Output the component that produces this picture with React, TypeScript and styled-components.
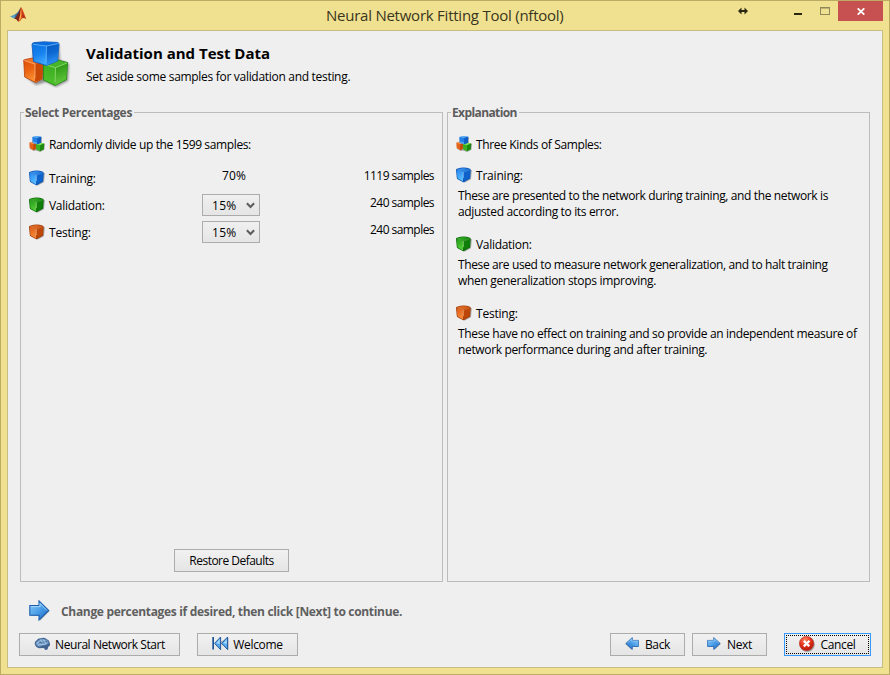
import React from "react";
import styled, { createGlobalStyle } from "styled-components";

const Global = createGlobalStyle`
  * { box-sizing: border-box; }
  body { margin: 0; font-family: "Open Sans", "Noto Sans", sans-serif; font-size: 12px; color: #000; }
  svg { display: block; flex: none; }
`;

const Window = styled.div`
  width: 890px;
  height: 675px;
  display: flex;
  flex-direction: column;
  background: #f0e190;
  border: 1px solid #bcab62;
  padding: 0 6px 6px;
  overflow: hidden;
`;

const TitleBar = styled.header`
  height: 29px;
  flex: none;
  display: grid;
  grid-template-columns: 319px 1fr auto;
`;

const AppIcon = styled.div`
  padding: 5px 0 0 3px;
`;

const WindowTitle = styled.h1`
  margin: 0;
  padding-top: 3px;
  font-size: 15px;
  line-height: 22px;
  font-weight: 400;
  letter-spacing: -0.24px;
  color: #3a3520;
  white-space: nowrap;
`;

const Controls = styled.div`
  display: flex;
  align-items: flex-start;
`;

const CloseButton = styled.button`
  width: 45px;
  height: 20px;
  margin-left: 7px;
  padding: 0;
  border: 0;
  background: #c75050;
  display: flex;
  align-items: center;
  justify-content: center;
`;

const Client = styled.main`
  flex: 1;
  display: flex;
  flex-direction: column;
  background: #efefef;
  border: 1px solid #c8bd80;
  padding: 0 12px 11px;
`;

const Header = styled.section`
  display: flex;
  height: 81px;
  padding: 9px 0 0 3px;
  gap: 15px;
`;

const HeaderText = styled.div`
  padding-top: 2px;
`;

const Heading = styled.h2`
  margin: 0;
  font-size: 15px;
  line-height: 22px;
  font-weight: 700;
  letter-spacing: 0;
`;

const Text = styled.span<{ $ls?: number }>`
  display: block;
  font-size: 12px;
  line-height: 16px;
  white-space: nowrap;
  letter-spacing: ${(p) => p.$ls ?? -0.35}px;
`;

const SubHeading = styled(Text)`
  margin-top: 5px;
`;

const Panels = styled.div`
  display: grid;
  grid-template-columns: 423px 423px;
  gap: 4px;
  height: 470px;
`;

const Panel = styled.section`
  position: relative;
  display: flex;
  flex-direction: column;
  border: 1px solid #bcbcbc;
  padding: 23px 8px 9px;
`;

const Legend = styled.h3<{ $ls: number }>`
  position: absolute;
  left: 3px;
  top: -8px;
  margin: 0;
  padding: 0 2px 0 1px;
  background: #efefef;
  font-size: 12px;
  line-height: 16px;
  font-weight: 700;
  letter-spacing: ${(p) => p.$ls}px;
  color: #5c5c5c;
  white-space: nowrap;
`;

const IconLine = styled.div`
  display: flex;
  height: 18px;
  gap: 4px;
`;

const IconLabel = styled(Text)`
  padding-top: 1px;
`;

const SampleGrid = styled.div`
  margin-top: 14px;
  display: grid;
  grid-template-columns: 173px 58px 1fr;
  grid-auto-rows: 27px;
`;

const SampleLabel = styled(IconLine)`
  padding-top: 2px;
`;

const Percent = styled(Text)`
  text-align: center;
  padding-left: 6px;
`;

const Count = styled(Text)`
  text-align: right;
`;

const Select = styled.button`
  width: 58px;
  height: 22px;
  margin-top: -1px;
  padding: 1px 4px 0 9px;
  display: flex;
  align-items: center;
  justify-content: space-between;
  border: 1px solid #acacac;
  background: linear-gradient(#f0f0f0, #e5e5e5);
  font: inherit;
  color: #000;
`;

const Button = styled.button<{ $w: number; $gap?: number; $focus?: boolean }>`
  position: relative;
  flex: none;
  width: ${(p) => p.$w}px;
  height: 23px;
  padding: 0;
  display: flex;
  align-items: center;
  justify-content: center;
  gap: ${(p) => p.$gap ?? 4}px;
  border: 1px solid ${(p) => (p.$focus ? "#3399ff" : "#acacac")};
  background: linear-gradient(#f1f1f1, #e5e5e5);
  font: inherit;
  color: #000;

  svg {
    margin-bottom: 2px;
  }

  &::after {
    content: "";
    display: ${(p) => (p.$focus ? "block" : "none")};
    position: absolute;
    inset: 1px;
    border: 1px dotted #000;
  }
`;

const RestoreRow = styled.div`
  margin: auto 0 0;
  display: flex;
  justify-content: center;
`;

const Kind = styled.div<{ $first?: boolean }>`
  margin-top: ${(p) => (p.$first ? 13 : 16)}px;
  height: 53px;
`;

const KindText = styled.div`
  padding: 3px 0 0 2px;
`;

const Hint = styled.div`
  display: flex;
  gap: 10px;
  height: 51px;
  padding: 18px 0 0 9px;
`;

const HintText = styled(Text)`
  padding: 4px 0 0 1px;
  font-weight: 700;
  color: #5f5f5f;
`;

const Footer = styled.footer`
  display: flex;
  margin-left: -1px;
`;

const Gap = styled.div<{ $w: number }>`
  flex: none;
  width: ${(p) => p.$w}px;
`;

const PALETTE = {
  blue: { top: "#3f9af2", topDark: "#1b6fd6", left: "#2187f0", leftLow: "#5cbcff", right: "#0d62cc", edge: "#0b55b4", glow: "#a5daff" },
  green: { top: "#3fb52c", topDark: "#158a10", left: "#1d9c14", leftLow: "#56cc3a", right: "#0f7f0a", edge: "#0c6a08", glow: "#b2ef90" },
  orange: { top: "#e8752e", topDark: "#c9520f", left: "#dc5a14", leftLow: "#f58a3c", right: "#bd4608", edge: "#a03c06", glow: "#ffc08a" },
};
type Tone = keyof typeof PALETTE;

function Cube({ tone }: { tone: Tone }) {
  const c = PALETTE[tone];
  const id = `cube-${tone}`;
  return (
    <svg width="16" height="16" viewBox="0 0 16 16">
      <defs>
        <linearGradient id={id} x1="0" y1="0" x2="0.3" y2="1">
          <stop offset="0" stopColor={c.left} />
          <stop offset="1" stopColor={c.leftLow} />
        </linearGradient>
        <linearGradient id={id + "t"} x1="0" y1="0" x2="1" y2="0">
          <stop offset="0" stopColor={c.top} />
          <stop offset="1" stopColor={c.topDark} />
        </linearGradient>
      </defs>
      <path d="M2.500 4 8.500 15.800 15 12.200 15.900 3z" fill="#000" opacity=".28" />
      <path d="M0 2.900Q0 2.100 .9 1.800 5 .6 7.500 .5q3.300.1 6.500 1.300.8.3.7 1.200L14.200 10.900q-.1.8-.8 1.200L8.200 15q-.8.4-1.500 0L1.600 12.200q-.7-.4-.8-1.200Z" fill={c.edge} />
      <path d="M.7 2.700Q5 1.200 7.500 1.100q3.300.1 6.400 1.500L7.300 4.900Z" fill={`url(#${id}t)`} />
      <path d="M.6 3.200 7 5.200v9.300L1.900 11.600Q1.500 11.300 1.400 10.800Z" fill={`url(#${id})`} />
      <path d="M7.400 5.200 14.200 2.900l-.7 8.100-6.100 3.600Z" fill={c.right} />
      <path d="M7.300 5.200v6" stroke={c.glow} strokeWidth=".9" opacity=".75" />
      <path d="M1 3.200 7.300 5.200l6.500-2.300" stroke={c.glow} strokeWidth=".5" fill="none" opacity=".5" />
    </svg>
  );
}

function SmallCubes() {
  return (
    <svg width="16" height="16" viewBox="0 0 16 16">
      <path d="M4.500 1 12.700 1.500 13 7l3 1.200-.6 5.600-4.300 2.200L7 14.500 4.500 15 1.200 12.500Z" fill="#000" opacity=".3" />
      <path d="M.3 6.800 3.500 6 7 7.200 6.700 13 4.300 14.200.7 12.300Z" fill="#e2641c" />
      <path d="M.3 6.800 3.500 6 7 7.200 4.200 8.200Z" fill="#f39350" />
      <path d="M4.300 8.200 7 7.200 6.700 13 4.300 14.200Z" fill="#c04a0a" />
      <path d="M6.900 8 11 6.600 15.200 7.500 14.800 13.200 11 15.300 7.200 13.500Z" fill="#3bb023" />
      <path d="M6.900 8 11 6.600 15.200 7.500 11.100 9.200Z" fill="#86dc60" />
      <path d="M11.100 9.200 15.200 7.500 14.800 13.200 11 15.300Z" fill="#1d8810" />
      <path d="M3.200 1 7.500.2 12.300.7 11.900 6.800 8.200 8.300 3.700 7Z" fill="#2580e6" />
      <path d="M3.200 1 7.500.2 12.300.7 8.200 1.900Z" fill="#5eaef5" />
      <path d="M8.200 1.900 12.300.8 11.900 6.800 8.200 8.300Z" fill="#0f5cc0" />
      <path d="M4.200 5.500 8 6.500V8L4 7Z" fill="#6cbcff" opacity=".7" />
    </svg>
  );
}

function BigCubes() {
  return (
    <svg width="48" height="48" viewBox="0 0 48 48">
      <defs>
        <linearGradient id="bigBlue" x1="0" y1="0" x2="0.5" y2="1">
          <stop offset="0" stopColor="#0a6fe0" />
          <stop offset=".5" stopColor="#1580ee" />
          <stop offset="1" stopColor="#46b2ff" />
        </linearGradient>
        <linearGradient id="bigBlueSide" x1="0" y1="0" x2="0.2" y2="1">
          <stop offset="0" stopColor="#0758c0" />
          <stop offset=".5" stopColor="#0d69d2" />
          <stop offset="1" stopColor="#2b92f2" />
        </linearGradient>
        <linearGradient id="bigOrange" x1="0" y1="0" x2="0.4" y2="1">
          <stop offset="0" stopColor="#dc4e08" />
          <stop offset=".5" stopColor="#ea6212" />
          <stop offset="1" stopColor="#ff9638" />
        </linearGradient>
        <linearGradient id="bigGreen" x1="0.8" y1="0" x2="0.2" y2="1">
          <stop offset="0" stopColor="#2da318" />
          <stop offset="1" stopColor="#52c22e" />
        </linearGradient>
        <linearGradient id="bigGreenSide" x1="0" y1="0" x2="0.2" y2="1">
          <stop offset="0" stopColor="#249012" />
          <stop offset="1" stopColor="#62c83a" />
        </linearGradient>
        <filter id="bigShadow" x="-20%" y="-20%" width="140%" height="140%">
          <feGaussianBlur stdDeviation="1" />
        </filter>
      </defs>
      <path d="M13 4 36 4 37 20 46 24 45 41 33 47 23 42 13 45 4 38Z" fill="#000" opacity=".4" filter="url(#bigShadow)" />
      <path d="M.7 20Q5 18.500 11 18L20 21.500 19 39 12.500 42.500 1.700 37Z" fill="url(#bigOrange)" stroke="#b83f08" strokeWidth=".8" strokeLinejoin="round" />
      <path d="M1 20.200 11 18.200 19 21 12 24Z" fill="#ee7228" />
      <path d="M12 24.500 19.500 21.500 19 39 12 42Z" fill="#cb4906" />
      <path d="M1.200 20.500 12 24.200V38.500" fill="none" stroke="#ffc090" strokeWidth=".9" opacity=".75" />
      <path d="M20.500 24 33 19.500 44.500 22.500 43.500 39.500 32 45.500 20.500 40Z" fill="url(#bigGreen)" stroke="#188409" strokeWidth=".8" strokeLinejoin="round" />
      <path d="M21 24 33 20 44 22.700 32.500 27.500Z" fill="#48b42c" />
      <path d="M32.500 28 44 23.200 43.300 39 32.200 45Z" fill="url(#bigGreenSide)" />
      <path d="M21.500 24.400 32.500 27.700 32 42M32.500 27.700 44 23" fill="none" stroke="#a6ea86" strokeWidth=".9" opacity=".75" />
      <path d="M9 4.500Q9 3 11 2.600L21 1.800l13 .6q2 .1 2 2L34.500 21 23.500 25.500 10.500 21.500Z" fill="url(#bigBlue)" stroke="#0a55ba" strokeWidth=".8" strokeLinejoin="round" />
      <path d="M10 4 21 2.200 35.300 3 23.500 5.800Z" fill="#0a6cdb" />
      <path d="M23.500 6 35.500 3.800 34.200 20.700 23.500 25Z" fill="url(#bigBlueSide)" />
      <path d="M10 4.300 23.500 6 23 22.500M23.500 6 35.500 3.600" fill="none" stroke="#7cc4ff" strokeWidth=".9" opacity=".75" />
    </svg>
  );
}

function Arrow({ w, h, back }: { w: number; h: number; back?: boolean }) {
  const id = `arrow${w}${back ? "b" : "n"}`;
  return (
    <svg width={w} height={h} viewBox="0 0 21 21" preserveAspectRatio="none">
      <defs>
        <linearGradient id={id} x1="0" y1="0" x2="1" y2="1">
          <stop offset="0" stopColor="#8fcdf8" />
          <stop offset=".5" stopColor="#4b9ee8" />
          <stop offset="1" stopColor="#1764c0" />
        </linearGradient>
      </defs>
      <g transform={back ? "translate(21 0) scale(-1 1)" : undefined}>
        <path d="M1.500 6.500H11V2l9.800 9L11 20.800V16H1.500Z" fill="#000" opacity=".3" />
        <path d="M.8 5.500H10V.9l9.700 9.600L10 20V15.300H.8Z" fill={`url(#${id})`} stroke="#1b5fb0" strokeWidth="1.100" />
        <path d="M1.900 6.600H11V3.400l7 7.100" fill="none" stroke="#b5defc" strokeWidth=".8" />
      </g>
    </svg>
  );
}

function MatlabLogo() {
  return (
    <svg width="18" height="18" viewBox="0 0 18 18">
      <path d="M0 10.500 5.500 8 7.500 10 4.500 12.700Z" fill="#5a9fc4" />
      <path d="M5.500 8Q7.800 7.300 10.500 1.500L9 9.500 6.800 11.700 4.500 12.700Z" fill="#396b93" />
      <path d="M11 1C9.300 4.500 8.500 7.500 6.500 10.200L4.500 12.700Q6.500 12.500 8 15.600 10 15.300 11.500 12.500Z" fill="#7c2418" />
      <path d="M11 1Q12.300 1.500 16.200 13.200 14 11.300 12 12.500 10 15.500 8.200 15.700 10.500 9 11 1Z" fill="#e2511e" />
      <path d="M11 1.500Q11.700 7 10.800 12.700L9 15Q10.600 8 11 1.500Z" fill="#f8b04a" />
      <path d="M12 4Q13 9 16 13 14 11.300 12.700 12.100Z" fill="#a62a17" />
    </svg>
  );
}

function ControlGlyphs() {
  return (
    <svg width="93" height="20" viewBox="0 0 93 20">
      <path d="M0 10 3.500 6.500v2.500h3V6.500L10 10 6.500 13.500V11h-3v2.500Z" fill="#29270f" />
      <rect x="56" y="12" width="8" height="2" fill="#29270f" />
      <rect x="82.500" y="6.500" width="9" height="7" fill="none" stroke="#91885a" />
      <path d="M82 7h10" stroke="#91885a" />
    </svg>
  );
}

function CloseGlyph() {
  return (
    <svg width="8" height="7" viewBox="0 0 8 7">
      <path d="M.7.300 7.300 6.700M7.300.300.700 6.700" stroke="#fff" strokeWidth="1.700" />
    </svg>
  );
}

function Chevron() {
  return (
    <svg width="9" height="7" viewBox="0 0 9 7">
      <path d="M.9 1.200 4.500 5 8.100 1.200" fill="none" stroke="#5c5c5c" strokeWidth="2" />
    </svg>
  );
}

function Brain() {
  return (
    <svg width="17" height="14" viewBox="0 0 17 14">
      <path d="M1 8Q0 5 2.500 3.500 4 1 7 1.300 10 0 12.500 2 15.500 3 15.800 6q.8 3-1.500 3.800L13.500 12.500 11 13 10 11 5 11.200Q2 10.800 1 8Z" fill="#42638f" />
      <path d="M1.700 7.500Q1.500 5 4 3.500 7 1 10 2q4 .4 4.800 4Q12 9 9 8.200 6 10.500 4 9.200Z" fill="#6f9ac6" />
      <path d="M3 7q1-3 3-2M6 3q2 0 2 2M9 3q3 0 2.500 3M4 8.500q2-2 4-1t5-1.500" fill="none" stroke="#c2dbef" strokeWidth=".7" />
      <path d="M5 5.800q2-1 3 .5m3-2.300 2 1" stroke="#34547f" strokeWidth=".7" fill="none" />
    </svg>
  );
}

function Rewind() {
  return (
    <svg width="17" height="15" viewBox="0 0 17 15">
      <path d="M2.500 8 9 14.500V8l7.500 6V2Z" fill="#000" opacity=".2" />
      <rect x=".3" y="1" width="1.700" height="12.500" fill="#1f5796" />
      <path d="M8.600 1v12.600L2.600 7.300ZM15.600 1v12.600L9.600 7.300Z" fill="#58aaf0" stroke="#174f94" strokeWidth=".9" />
      <path d="M7.800 3v5L4.200 7.200ZM14.800 3v5L11.200 7.200Z" fill="#a2d6fc" />
    </svg>
  );
}

function CancelIcon() {
  return (
    <svg width="16" height="16" viewBox="0 0 16 16">
      <defs>
        <radialGradient id="cancel" cx=".4" cy=".25" r=".8">
          <stop offset="0" stopColor="#ff8460" />
          <stop offset=".5" stopColor="#e5341c" />
          <stop offset="1" stopColor="#b01206" />
        </radialGradient>
      </defs>
      <circle cx="8.300" cy="8.400" r="7.500" fill="#000" opacity=".3" />
      <circle cx="7.500" cy="7.500" r="7.100" fill="url(#cancel)" stroke="#b72b18" strokeWidth=".6" />
      <path d="m4.900 4.900 5.400 5.400m.2-5.600-5.700 5.700" stroke="#fff" strokeWidth="2.300" />
    </svg>
  );
}

const KINDS: { tone: Tone; name: string; ls: number; lines: [string, number][] }[] = [
  {
    tone: "blue",
    name: "Training:",
    ls: -0.2,
    lines: [
      ["These are presented to the network during training, and the network is", -0.375],
      ["adjusted according to its error.", -0.35],
    ],
  },
  {
    tone: "green",
    name: "Validation:",
    ls: -0.3,
    lines: [
      ["These are used to measure network generalization, and to halt training", -0.38],
      ["when generalization stops improving.", -0.31],
    ],
  },
  {
    tone: "orange",
    name: "Testing:",
    ls: -0.2,
    lines: [
      ["These have no effect on training and so provide an independent measure of", -0.35],
      ["network performance during and after training.", -0.35],
    ],
  },
];

export default function App() {
  return (
    <Window>
      <Global />
      <TitleBar>
        <AppIcon><MatlabLogo /></AppIcon>
        <WindowTitle>Neural Network Fitting Tool (nftool)</WindowTitle>
        <Controls>
          <ControlGlyphs />
          <CloseButton aria-label="Close"><CloseGlyph /></CloseButton>
        </Controls>
      </TitleBar>
      <Client>
        <Header>
          <BigCubes />
          <HeaderText>
            <Heading>Validation and Test Data</Heading>
            <SubHeading $ls={-0.3}>Set aside some samples for validation and testing.</SubHeading>
          </HeaderText>
        </Header>
        <Panels>
          <Panel>
            <Legend $ls={-0.3}>Select Percentages</Legend>
            <IconLine>
              <SmallCubes />
              <IconLabel $ls={-0.37}>Randomly divide up the 1599 samples:</IconLabel>
            </IconLine>
            <SampleGrid>
              <SampleLabel><Cube tone="blue" /><IconLabel $ls={-0.2}>Training:</IconLabel></SampleLabel>
              <Percent $ls={0.1}>70%</Percent>
              <Count $ls={-0.55}>1119 samples</Count>
              <SampleLabel><Cube tone="green" /><IconLabel $ls={-0.3}>Validation:</IconLabel></SampleLabel>
              <Select><Text $ls={0.3}>15%</Text><Chevron /></Select>
              <Count $ls={-0.55}>240 samples</Count>
              <SampleLabel><Cube tone="orange" /><IconLabel $ls={-0.2}>Testing:</IconLabel></SampleLabel>
              <Select><Text $ls={0.3}>15%</Text><Chevron /></Select>
              <Count $ls={-0.55}>240 samples</Count>
            </SampleGrid>
            <RestoreRow><Button $w={115}><Text $ls={-0.52}>Restore Defaults</Text></Button></RestoreRow>
          </Panel>
          <Panel>
            <Legend $ls={-0.6}>Explanation</Legend>
            <IconLine>
              <SmallCubes />
              <IconLabel $ls={-0.37}>Three Kinds of Samples:</IconLabel>
            </IconLine>
            {KINDS.map((k, i) => (
              <Kind key={k.name} $first={i === 0}>
                <IconLine>
                  <Cube tone={k.tone} />
                  <IconLabel $ls={k.ls}>{k.name}</IconLabel>
                </IconLine>
                <KindText>
                  {k.lines.map(([t, ls]) => <Text key={t} $ls={ls}>{t}</Text>)}
                </KindText>
              </Kind>
            ))}
          </Panel>
        </Panels>
        <Hint>
          <Arrow w={21} h={21} />
          <HintText $ls={-0.32}>Change percentages if desired, then click [Next] to continue.</HintText>
        </Hint>
        <Footer>
          <Button $w={161}><Brain /><Text $ls={-0.43}>Neural Network Start</Text></Button>
          <Gap $w={17} />
          <Button $w={101}><Rewind /><Text $ls={-0.3}>Welcome</Text></Button>
          <Gap $w={312} />
          <Button $w={75} $gap={6}><Arrow w={14} h={13} back /><Text>Back</Text></Button>
          <Gap $w={7} />
          <Button $w={75} $gap={6}><Arrow w={14} h={13} /><Text>Next</Text></Button>
          <Gap $w={17} />
          <Button $w={87} $gap={5} $focus><CancelIcon /><Text>Cancel</Text></Button>
        </Footer>
      </Client>
    </Window>
  );
}
